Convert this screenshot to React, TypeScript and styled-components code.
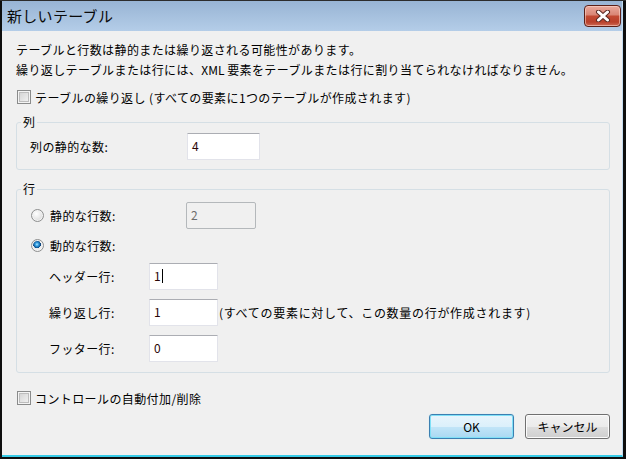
import React from "react";
import styled, { createGlobalStyle } from "styled-components";

const FONT = `"Noto Sans CJK JP", "Noto Sans", sans-serif`;

const Global = createGlobalStyle`
  html, body { margin: 0; padding: 0; background: #ffffff; }
  * { box-sizing: border-box; }
`;

const Window = styled.div`
  width: 626px;
  height: 459px;
  display: flex;
  flex-direction: column;
  background: #0e0e0e;
  border-top: 1px solid #2c2c2c;
  padding: 0 3px 2px 2px;
  font-family: ${FONT};
  color: #000;
`;

const Inner = styled.div`
  flex: 1;
  display: flex;
  flex-direction: column;
  border-right: 1px solid #c3dbef;
  border-bottom: 2px solid #37cbe7;
`;

const TitleBar = styled.div`
  height: 30px;
  flex: none;
  display: flex;
  align-items: flex-start;
  justify-content: space-between;
  padding: 4px 1px 0 5px;
  background: linear-gradient(#98b4d4, #b4cde8);
`;

const TitleText = styled.div`
  font-size: 15px;
  line-height: 22px;
  color: #0a0a0a;
  letter-spacing: 0.3px;
`;

const CloseButton = styled.div`
  width: 37px;
  height: 22px;
  border: 1px solid #5c2018;
  border-radius: 4px;
  display: flex;
  align-items: center;
  justify-content: center;
  background: linear-gradient(#eaa99c 0%, #d98574 45%, #c34a33 50%, #b9402b 80%, #cf6a55 100%);
  box-shadow: inset 0 0 0 1px rgba(255, 220, 210, 0.55);
`;

const Body = styled.div`
  flex: 1;
  background: #f0f0f0;
  padding: 9px 12px 0 14px;
  display: flex;
  flex-direction: column;
  font-size: 12px;
  letter-spacing: 0.4px;
`;

const Intro = styled.div`
  line-height: 20px;
  white-space: nowrap;
`;

const Latin = styled.span`
  letter-spacing: 0;
`;

const CheckRow = styled.div<{ $mt: number }>`
  display: flex;
  align-items: center;
  gap: 4px;
  height: 20px;
  margin-top: ${(p) => p.$mt}px;
  white-space: nowrap;
  padding-left: 1px;
`;

const CheckBox = styled.span`
  width: 14px;
  height: 14px;
  flex: none;
  border: 1px solid #8a8b8b;
  background: linear-gradient(135deg, #cfcfcf, #f6f6f6);
  box-shadow: inset 0 0 0 1px #f4f4f4, inset 0 0 0 2px #bdbdbd;
`;

const Group = styled.fieldset<{ $mt: number }>`
  margin: ${(p) => p.$mt}px 0 0;
  padding: 0 0 0 4px;
  border: 1px solid #d5dfe5;
  border-radius: 3px;
  min-width: 0;
`;

const Legend = styled.legend`
  padding: 0 2px;
  font-size: 12px;
  line-height: 16px;
`;

const GroupBody = styled.div<{ $pt: number; $pb: number; $pl: number }>`
  display: flex;
  flex-direction: column;
  padding: ${(p) => p.$pt}px 0 ${(p) => p.$pb}px ${(p) => p.$pl}px;
`;

const FieldRow = styled.div<{ $mt?: number; $labelW: number; $indent?: number }>`
  display: grid;
  grid-template-columns: ${(p) => p.$labelW}px auto 1fr;
  align-items: center;
  margin-top: ${(p) => p.$mt ?? 0}px;
  padding-left: ${(p) => p.$indent ?? 0}px;
  white-space: nowrap;
`;

const RadioLabel = styled.div`
  display: flex;
  align-items: center;
  gap: 6px;
  height: 20px;
`;

const Radio = styled.span<{ $checked?: boolean }>`
  width: 13px;
  height: 13px;
  flex: none;
  border-radius: 50%;
  border: 1px solid #8e8f8f;
  background: ${(p) =>
    p.$checked
      ? "radial-gradient(circle at 45% 40%, #b9e6ff 0, #3aa6e6 1.5px, #1465a8 3px, #0b3e74 3.8px, #e9e9e9 4px, #f6f6f6 100%)"
      : "radial-gradient(circle at 40% 35%, #ffffff 0, #eaeaea 45%, #cfcfcf 100%)"};
  box-shadow: inset 0 0 0 1px #f3f3f3;
`;

const TextBox = styled.div<{ $w: number; $disabled?: boolean }>`
  width: ${(p) => p.$w}px;
  height: 27px;
  display: flex;
  align-items: center;
  padding: 0 0 2px 4px;
  background: ${(p) => (p.$disabled ? "#f0f0f0" : "#ffffff")};
  border: 1px solid ${(p) => (p.$disabled ? "#b4b8bb" : "#e2e3ea")};
  border-top-color: ${(p) => (p.$disabled ? "#b4b8bb" : "#abadb3")};
  border-radius: ${(p) => (p.$disabled ? "2px" : "1px")};
  color: ${(p) => (p.$disabled ? "#6d6d6d" : "#2a0606")};
  font-size: 12px;
  letter-spacing: 0;
`;

const Caret = styled.span`
  display: inline-block;
  width: 1px;
  height: 14px;
  margin-left: 1px;
  background: #000;
`;

const Note = styled.span`
  padding-left: 1px;
  letter-spacing: 0.7px;
`;

const ButtonRow = styled.div`
  display: flex;
  justify-content: flex-end;
  gap: 11px;
  margin-top: 6px;
`;

const Button = styled.div<{ $default?: boolean }>`
  width: 85px;
  height: 25px;
  display: flex;
  align-items: center;
  justify-content: center;
  border-radius: 3px;
  font-size: 12px;
  letter-spacing: 0;
  border: 1px solid ${(p) => (p.$default ? "#3c7fb1" : "#707070")};
  background: ${(p) =>
    p.$default
      ? "linear-gradient(#e8f5fc 0%, #dbf0fb 50%, #c2e5f8 51%, #a9d9f2 100%)"
      : "linear-gradient(#f2f2f2 0%, #ebebeb 50%, #dddddd 51%, #cfcfcf 100%)"};
  box-shadow: ${(p) =>
    p.$default
      ? "inset 0 0 0 1px #7fe0f7, 0 0 1px #9fe4f6"
      : "inset 0 0 0 1px #fbfbfb"};
`;

function CloseIcon() {
  return (
    <svg width="16" height="12" viewBox="0 0 16 12">
      <path d="M3.5 2 L12.5 10 M12.5 2 L3.5 10" stroke="#5a2a24" strokeWidth="5" strokeLinecap="round" fill="none" />
      <path d="M3.5 2 L12.5 10 M12.5 2 L3.5 10" stroke="#ffffff" strokeWidth="3" strokeLinecap="round" fill="none" />
    </svg>
  );
}

export default function App() {
  return (
    <>
      <Global />
      <Window>
        <Inner>
          <TitleBar>
            <TitleText>新しいテーブル</TitleText>
            <CloseButton>
              <CloseIcon />
            </CloseButton>
          </TitleBar>
          <Body>
            <Intro>テーブルと行数は静的または繰り返される可能性があります。</Intro>
            <Intro>
              繰り返しテーブルまたは行には、<Latin>XML </Latin>要素をテーブルまたは行に割り当てられなければなりません。
            </Intro>
            <CheckRow $mt={7}>
              <CheckBox />
              <span>テーブルの繰り返し (すべての要素に1つのテーブルが作成されます)</span>
            </CheckRow>

            <Group $mt={7}>
              <Legend>列</Legend>
              <GroupBody $pt={3} $pb={9} $pl={9}>
                <FieldRow $labelW={157}>
                  <span>列の静的な数:</span>
                  <TextBox $w={73}>4</TextBox>
                </FieldRow>
              </GroupBody>
            </Group>

            <Group $mt={11}>
              <Legend>行</Legend>
              <GroupBody $pt={5} $pb={10} $pl={10}>
                <FieldRow $labelW={155}>
                  <RadioLabel>
                    <Radio />
                    <span>静的な行数:</span>
                  </RadioLabel>
                  <TextBox $w={70} $disabled>
                    2
                  </TextBox>
                </FieldRow>
                <FieldRow $labelW={155} $mt={6}>
                  <RadioLabel>
                    <Radio $checked />
                    <span>動的な行数:</span>
                  </RadioLabel>
                </FieldRow>
                <FieldRow $labelW={100} $indent={18} $mt={8}>
                  <span>ヘッダー行:</span>
                  <TextBox $w={69}>
                    1<Caret />
                  </TextBox>
                </FieldRow>
                <FieldRow $labelW={100} $indent={18} $mt={9}>
                  <span>繰り返し行:</span>
                  <TextBox $w={69}>1</TextBox>
                  <Note>(すべての要素に対して、この数量の行が作成されます)</Note>
                </FieldRow>
                <FieldRow $labelW={100} $indent={18} $mt={9}>
                  <span>フッター行:</span>
                  <TextBox $w={69}>0</TextBox>
                </FieldRow>
              </GroupBody>
            </Group>

            <CheckRow $mt={15}>
              <CheckBox />
              <span>コントロールの自動付加/削除</span>
            </CheckRow>

            <ButtonRow>
              <Button $default>OK</Button>
              <Button>キャンセル</Button>
            </ButtonRow>
          </Body>
        </Inner>
      </Window>
    </>
  );
}
